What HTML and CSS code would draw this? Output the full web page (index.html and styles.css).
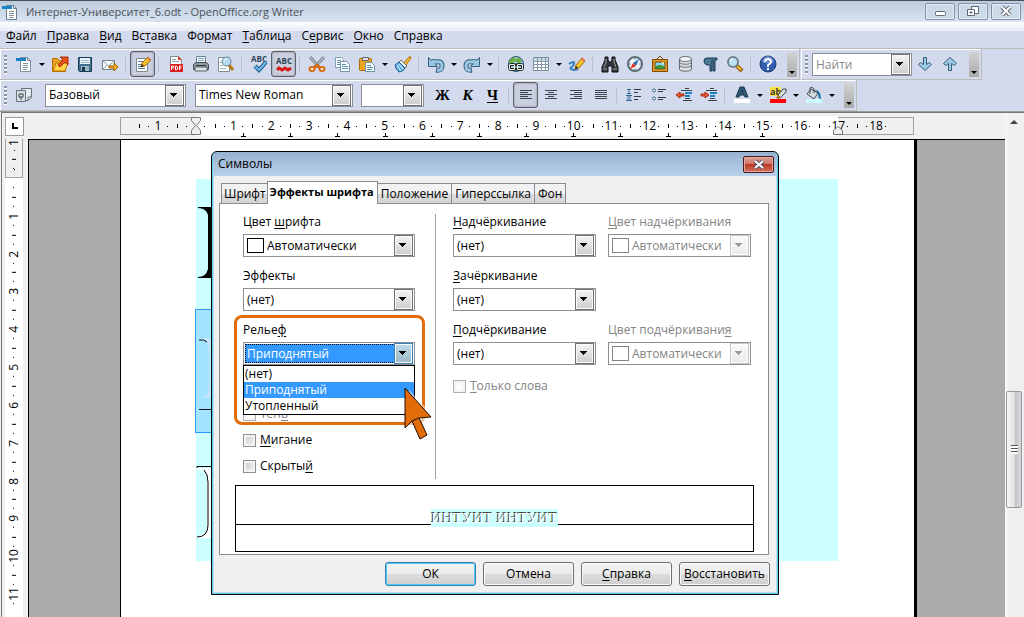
FILE: index.html
```html
<!DOCTYPE html>
<html lang="ru">
<head>
  <meta charset="UTF-8">
  <meta name="viewport" content="width=device-width, initial-scale=1.0">
  <title>Интернет-Университет_6.odt - OpenOffice.org Writer</title>
  <link rel="stylesheet" href="styles.css">
</head>
<body>
  <header class="titlebar">
    <svg class="icon" viewBox="0 0 18 18"><path d="M5.500 2.500h7l3 3v11h-10z" fill="#fff" stroke="#6d7f8c"/><path d="M12.500 2.500v3h3" fill="none" stroke="#6d7f8c"/><path d="M1 3h10v3H1z" fill="#1583c5"/><path d="M8 8.500h5M8 10.500h5M8 12.500h5M8 14.500h4" stroke="#7d929f"/></svg>
    <h1>Интернет-Университет_6.odt - OpenOffice.org Writer</h1>
    <div class="window-buttons">
      <button aria-label="Свернуть"><svg viewBox="0 0 18 14"><rect x="4.500" y="7.500" width="10" height="4" rx="1" fill="#fff" stroke="#626878"/></svg></button>
      <button aria-label="Восстановить окно"><svg viewBox="0 0 18 14"><path d="M7.500 2.500h7v7h-7z" fill="#fff" stroke="#626878"/><path d="M3.500 5.500h7v6h-7z" fill="#fff" stroke="#626878"/><path d="M6 8h2v1H6z" stroke="#626878"/></svg></button>
      <button aria-label="Закрыть"><svg viewBox="0 0 18 14"><path d="m5 3 8 8m0-8-8 8" stroke="#626878" stroke-width="4"/><path d="m5 3 8 8m0-8-8 8" stroke="#fff" stroke-width="2"/></svg></button>
    </div>
  </header>

  <nav class="menubar">
    <a href="#"><u>Ф</u>айл</a>
    <a href="#"><u>П</u>равка</a>
    <a href="#"><u>В</u>ид</a>
    <a href="#">Вс<u>т</u>авка</a>
    <a href="#">Фо<u>р</u>мат</a>
    <a href="#"><u>Т</u>аблица</a>
    <a href="#">С<u>е</u>рвис</a>
    <a href="#"><u>О</u>кно</a>
    <a href="#">Спр<u>а</u>вка</a>
  </nav>

  <div class="toolbars">
    <div class="toolbar">
      <span class="grip"></span>
      <button class="tool" aria-label="Создать"><svg class="icon" viewBox="0 0 18 18"><path d="M5.500 2.500h7l3 3v11h-10z" fill="#fff" stroke="#7d8f9c"/><path d="M12.500 2.500v3h3" fill="none" stroke="#7d8f9c"/><path d="M1 3h10v3H1z" fill="#1583c5"/><path d="M8 8.500h5M8 10.500h5M8 12.500h5M8 14.500h4" stroke="#7d929f"/></svg></button>
      <button class="drop" aria-label="Создать, список"></button>
      <button class="tool" aria-label="Открыть"><svg class="icon" viewBox="0 0 18 18"><path d="M1.500 16.500v-13h5l2 2h6v11z" fill="#e9a31c" stroke="#b76b00"/><path d="m2 16 3-8h12l-3 8z" fill="#ffd548" stroke="#bd7300"/><path d="m7 10 5-5-3-3h8v8l-3-3-5 5z" fill="#e9541b" stroke="#a92d05"/></svg></button>
      <button class="tool" aria-label="Сохранить"><svg class="icon" viewBox="0 0 18 18"><path d="M2.500 2.500h13v14h-12l-1-1z" fill="#426e8e" stroke="#173a55"/><path d="M4 3h10v6H4z" fill="#e5f2f8"/><path d="M5 11h8v5H5z" fill="#9cb7c6"/><path d="M6 12h3v4H6z" fill="#17374e"/><path d="M5 5.500h8M5 7.500h8" stroke="#a4bccb"/></svg></button>
      <button class="tool" aria-label="Отправить"><svg class="icon" viewBox="0 0 18 18"><path d="M1.500 5.500h12v9h-12z" fill="#f6f8f9" stroke="#76848e"/><path d="m2 6 5.500 5L13 6M2 14l4-4m7 4-4-4" fill="none" stroke="#91a0a9"/><path d="M8 11h5V8l4 4-4 4v-3H8z" fill="#f7af24" stroke="#a76800"/></svg></button>
      <span class="sep"></span>
      <button class="tool pressed" aria-label="Редактировать"><svg class="icon" viewBox="0 0 18 18"><path d="M2.500 3.500h11v13h-11z" fill="#fff" stroke="#7e8992"/><path d="M4 6.500h6M4 9.500h4M4 11.500h3M4 13.500h7" stroke="#547d99"/><path d="m7 12 1-4 6-6 3 3-6 6z" fill="#f4c329" stroke="#a36809"/><path d="m13 3 1-1 3 3-1 1z" fill="#ed7360"/><path d="m7 12 1-3 2 2z" fill="#222"/></svg></button>
      <span class="sep"></span>
      <button class="tool" aria-label="Экспорт в PDF"><svg class="icon" viewBox="0 0 18 18"><path d="M3.500 1.500h8l3 3v12h-11z" fill="#fff" stroke="#7d8991"/><path d="M11 1v4h4z" fill="#d7442b"/><path d="M5 4.500h4M5 6.500h7" stroke="#8ba0ae"/><path d="M3 9h13v8H3z" fill="#db1e1e"/><path d="M4.500 15v-4h2v2h-2m4-2v4h1l1-1v-2l-1-1h-1m6 0h-2v4m0-2h2" fill="none" stroke="#fff"/></svg></button>
      <button class="tool" aria-label="Печать"><svg class="icon" viewBox="0 0 18 18"><path d="M4.500 8.500v-7h9v7" fill="#f2f9ff" stroke="#688090"/><path d="M6 3.500h6M6 5.500h6" stroke="#81a7bd"/><path d="M1.500 9.500 4 7.500h10l2.500 2v5h-15z" fill="#919ba2" stroke="#424b51"/><path d="M3 12h12v4H3z" fill="#dce2e5" stroke="#556068"/><path d="M4 10.500h10" stroke="#30383d"/></svg></button>
      <button class="tool" aria-label="Предварительный просмотр"><svg class="icon" viewBox="0 0 18 18"><path d="M1.500 2.500h11v14h-11z" fill="#fff" stroke="#838e96"/><path d="M3 7.500h3M3 10.500h3M3 13.500h6" stroke="#9bafbb"/><path d="m12 10 4 5" stroke="#b77919" stroke-width="3"/><circle cx="9.500" cy="6.500" r="4.500" fill="#b3dbf1" stroke="#6c8493"/><path d="M7 6a3 3 0 0 1 3-2" fill="none" stroke="#fff"/></svg></button>
      <span class="sep"></span>
      <button class="tool" aria-label="Орфография"><svg class="icon" viewBox="0 0 18 18"><text class="abc" x="9" y="7">ABC</text><path d="m5 11 4 4 7-8" fill="none" stroke="#155386" stroke-width="4"/><path d="m5 11 4 4 7-8" fill="none" stroke="#70b9e8" stroke-width="2"/></svg></button>
      <button class="tool pressed" aria-label="Автопроверка"><svg class="icon" viewBox="0 0 18 18"><text class="abc" x="9" y="9">ABC</text><path d="m2 15 2-2 3 2 3-2 3 2 3-2" fill="none" stroke="#d91818" stroke-width="3"/></svg></button>
      <span class="sep"></span>
      <button class="tool" aria-label="Вырезать"><svg class="icon" viewBox="0 0 18 18"><path d="m2 2 9 10M16 2 7 12" stroke="#738089" stroke-width="3"/><path d="m2 2 9 10M16 2 7 12" stroke="#dfe7ec"/><ellipse cx="4" cy="14" rx="2.500" ry="2" fill="#fff" stroke="#d66a10" stroke-width="2"/><ellipse cx="14" cy="14" rx="2.500" ry="2" fill="#fff" stroke="#d66a10" stroke-width="2"/><path d="m6 13 3-3 3 3" fill="none" stroke="#d66a10" stroke-width="3"/></svg></button>
      <button class="tool" aria-label="Копировать"><svg class="icon" viewBox="0 0 18 18"><path d="M2.500 2.500h6l2 2v8h-8z" fill="#fff" stroke="#7fa1b5"/><path d="M4 5.500h4M4 7.500h4M4 9.500h4" stroke="#5c91b0"/><path d="M7.500 6.500h6l3 3v7h-9z" fill="#f6fcff" stroke="#7298ae"/><path d="M9 9.500h4M9 11.500h6M9 13.500h6" stroke="#5c91b0"/></svg></button>
      <button class="tool" aria-label="Вставить"><svg class="icon" viewBox="0 0 18 18"><rect x="1.500" y="3.500" width="12" height="12" rx="1" fill="#eaa51d" stroke="#a96b00"/><path d="M4.500 2.500h6v3h-6z" fill="#e4e7e9" stroke="#5d666b"/><path d="M7.500 7.500h6l3 3v6h-9z" fill="#f7fcff" stroke="#6f91a6"/><path d="M9 10.500h4M9 12.500h6M9 14.500h5" stroke="#5c91b0"/></svg></button>
      <button class="drop" aria-label="Вставить, список"></button>
      <button class="tool" aria-label="Копировать форматирование"><svg class="icon" viewBox="0 0 18 18"><path d="m10 8 5-6q2-1 2 1l-5 7z" fill="#f5b932" stroke="#ad7104"/><path d="m7 5 6 6-2 2-6-6z" fill="#e8edf0" stroke="#68737b"/><path d="m5 7 6 6q-2 4-6 4-3-2-4-7z" fill="#64afe3" stroke="#246294"/><path d="m3 10 4 6m-2-7 4 5" stroke="#d4efff"/></svg></button>
      <span class="sep"></span>
      <button class="tool" aria-label="Отменить"><svg class="icon" viewBox="0 0 18 18"><path d="M4 7h6q5-1 5 4t-6 4" fill="none" stroke="#345e79" stroke-width="5"/><path d="M1.500 2.500v9h9l-3-3 3-3-4-1-2 1z" fill="#99c8e2" stroke="#345e79"/><path d="M5 7h5q5-1 5 4t-5 4" fill="none" stroke="#99c8e2" stroke-width="3"/></svg></button>
      <button class="drop" aria-label="Отменить, список"></button>
      <button class="tool" aria-label="Вернуть"><svg class="icon" viewBox="0 0 18 18"><path d="M14 7H8q-5-1-5 4t6 4" fill="none" stroke="#345e79" stroke-width="5"/><path d="M16.500 2.500v9h-9l3-3-3-3 4-1 2 1z" fill="#99c8e2" stroke="#345e79"/><path d="M13 7H8q-5-1-5 4t5 4" fill="none" stroke="#99c8e2" stroke-width="3"/></svg></button>
      <button class="drop" aria-label="Вернуть, список"></button>
      <span class="sep"></span>
      <button class="tool" aria-label="Гиперссылка"><svg class="icon" viewBox="0 0 18 18"><circle cx="9" cy="9" r="7.500" fill="#a5d0ea" stroke="#26536e"/><path d="m3 5 4-3 2 3-3 3-4 1m9-7 4 4-3 3-4-3z" fill="#6bae38"/><rect x="2.500" y="9.500" width="6" height="5" rx="2" fill="none" stroke="#1e2a30" stroke-width="3"/><rect x="9.500" y="9.500" width="6" height="5" rx="2" fill="none" stroke="#1e2a30" stroke-width="3"/><path d="M2.500 9.500h5v5h-5zm8 0h5v5h-5zM6 12h6" fill="none" stroke="#f0f2df"/></svg></button>
      <button class="tool" aria-label="Таблица"><svg class="icon" viewBox="0 0 18 18"><path d="M1.500 2.500h15v13h-15z" fill="#fff" stroke="#768b98"/><path d="M2 3h14v3H2z" fill="#c7dce7"/><path d="M1 6.500h16M1 9.500h16M1 12.500h16M5.500 3v13M9.500 3v13M13.500 3v13" stroke="#8498a5"/></svg></button>
      <button class="drop" aria-label="Таблица, список"></button>
      <button class="tool" aria-label="Рисование"><svg class="icon" viewBox="0 0 18 18"><path d="M1 9q6-4 5 0c-1 4-5 3-3 5q3 2 7 0" fill="none" stroke="#347ec0" stroke-width="2"/><path d="m7 14 1-4 6-7 3 3-6 7z" fill="#f4c329" stroke="#a36809"/><path d="m13 4 1-2 3 3-1 2z" fill="#e36d56"/><path d="m7 14 1-3 2 2z" fill="#222"/></svg></button>
      <span class="sep"></span>
      <button class="tool" aria-label="Найти и заменить"><svg class="icon" viewBox="0 0 18 18"><path d="M4 2h3v3l1 2h2l1-2V2h3v3l3 7v5h-6v-6H7v6H1v-5l3-7z" fill="#34383b" stroke="#111"/><path d="M5 4v3l-2 5m10-8v3l2 5M2 14h4m6 0h4" fill="none" stroke="#9ba3a7"/></svg></button>
      <button class="tool" aria-label="Навигатор"><svg class="icon" viewBox="0 0 18 18"><circle cx="9" cy="9" r="7" fill="#edf5fa" stroke="#5c6d78" stroke-width="2"/><path d="m13 4-6 4 3 3z" fill="#246fb3"/><path d="m4 14 3-6 3 3z" fill="#e92e22"/><path d="M9 3v2M9 13v2M3 9h2m8 0h2" stroke="#778995"/></svg></button>
      <button class="tool" aria-label="Галерея"><svg class="icon" viewBox="0 0 18 18"><path d="m6 4 3-3 3 3" fill="none" stroke="#754706"/><path d="M1.500 4.500h15v12h-15z" fill="#e99d24" stroke="#824904"/><path d="M4 7h10v7H4z" fill="#8ed1ed" stroke="#704308"/><path d="M4 12q4-4 10 0v2H4z" fill="#3c9032"/><circle cx="12" cy="8" r="1" fill="#fffb9d"/></svg></button>
      <button class="tool" aria-label="Источники данных"><svg class="icon" viewBox="0 0 18 18"><path d="M3.500 4v10c0 3 12 3 12 0V4" fill="#dce0e2" stroke="#626a70"/><ellipse cx="9.500" cy="4" rx="6" ry="2.500" fill="#f5f7f8" stroke="#626a70"/><path d="M3.500 7c0 3 12 3 12 0m-12 3c0 3 12 3 12 0" fill="none" stroke="#697177"/></svg></button>
      <button class="tool" aria-label="Непечатаемые символы"><svg class="icon" viewBox="0 0 18 18"><path d="M6 3h10v2h-2v11h-2V5h-1v11H9v-6H6q-3-1-3-4t3-3z" fill="#4d7896" stroke="#183a51"/></svg></button>
      <button class="tool" aria-label="Масштаб"><svg class="icon" viewBox="0 0 18 18"><path d="m10 10 6 6" stroke="#8d6012" stroke-width="4"/><path d="m11 11 4 4" stroke="#f0b73c" stroke-width="2"/><circle cx="7" cy="7" r="5" fill="#bce1f4" stroke="#71828d" stroke-width="2"/><path d="M4 6a3 3 0 0 1 3-2" fill="none" stroke="#fff"/></svg></button>
      <span class="sep"></span>
      <button class="tool" aria-label="Справка"><svg class="icon" viewBox="0 0 18 18"><circle cx="9" cy="9" r="8" fill="#315eaf" stroke="#183674"/><path d="M3 7a6 6 0 0 1 12 0q-6 3-12 0" fill="#638bcc"/><path d="M6 7q0-3 3-3t3 3q0 1-3 3v2m0 1v2" fill="none" stroke="#fff" stroke-width="2"/></svg></button>
      <button class="more" aria-label="Параметры панели"></button>
    </div>

    <div class="toolbar search">
      <span class="grip"></span>
      <form class="find combo">
        <input type="text" placeholder="Найти" aria-label="Найти">
      </form>
      <button class="tool" aria-label="Найти далее"><svg class="icon" viewBox="0 0 18 18"><path d="M7.500 2.500h3v7l3-2 2 2-6.500 6-6.500-6 2-2 3 2z" fill="#9dc9e2" stroke="#345e79"/></svg></button>
      <button class="tool" aria-label="Найти ранее"><svg class="icon" viewBox="0 0 18 18"><path d="M7.500 15.500h3v-7l3 2 2-2L9 2.500l-6.500 6 2 2 3-2z" fill="#9dc9e2" stroke="#345e79"/></svg></button>
      <button class="more" aria-label="Параметры поиска"></button>
    </div>
  </div>

  <div class="toolbars formatting">
    <div class="toolbar">
      <span class="grip"></span>
      <button class="tool" aria-label="Стили"><svg class="icon" viewBox="0 0 18 18"><path d="M6.500 2.500h10v9l-3 3h-7z" fill="#e7ebef" stroke="#65717a"/><path d="M16 11h-3v3" fill="none" stroke="#65717a"/><path d="M1.500 4.500h9v11h-9z" fill="#d9dee2" stroke="#65717a"/><path d="M4 11V8h4v3H4m2 0v3" fill="none" stroke="#34434e"/></svg></button>
      <span class="combo style-name"><select aria-label="Стиль"><option>Базовый</option></select></span>
      <span class="combo font-name"><select aria-label="Шрифт"><option>Times New Roman</option></select></span>
      <span class="combo font-size"><select aria-label="Кегль"><option></option></select></span>
      <button class="tool letter">Ж</button>
      <button class="tool letter italic">К</button>
      <button class="tool letter underline">Ч</button>
      <span class="sep"></span>
      <button class="tool pressed" aria-label="По левому краю"><svg class="icon" viewBox="0 0 18 18"><path d="M3 4.500h12M3 6.500h8M3 8.500h12M3 10.500h8M3 12.500h12" stroke="#3b454c"/></svg></button>
      <button class="tool" aria-label="По центру"><svg class="icon" viewBox="0 0 18 18"><path d="M3 4.500h12M6 6.500h6M3 8.500h12M6 10.500h6M3 12.500h12" stroke="#3b454c"/></svg></button>
      <button class="tool" aria-label="По правому краю"><svg class="icon" viewBox="0 0 18 18"><path d="M3 4.500h12M7 6.500h8M3 8.500h12M7 10.500h8M3 12.500h12" stroke="#3b454c"/></svg></button>
      <button class="tool" aria-label="По ширине"><svg class="icon" viewBox="0 0 18 18"><path d="M3 4.500h12M3 6.500h12M3 8.500h12M3 10.500h12M3 12.500h12" stroke="#3b454c"/></svg></button>
      <span class="sep"></span>
      <button class="tool" aria-label="Нумерованный список"><svg class="icon" viewBox="0 0 18 18"><path d="M2 3.500h4M2 7.500h4M4 3v5m-3 1.500h6M1 14.500h6M3 9v6m2-6v6" stroke="#356d91"/><path d="M9 3.500h7M9 6.500h4M9 10.500h7M9 13.500h4" stroke="#343c42"/></svg></button>
      <button class="tool" aria-label="Маркированный список"><svg class="icon" viewBox="0 0 18 18"><circle cx="4" cy="4.500" r="1.500" fill="#fff" stroke="#305d7b"/><circle cx="4" cy="12.500" r="1.500" fill="#fff" stroke="#305d7b"/><path d="M8 3.500h8M8 5.500h5M8 11.500h8M8 13.500h5" stroke="#343c42"/></svg></button>
      <button class="tool" aria-label="Уменьшить отступ"><svg class="icon" viewBox="0 0 18 18"><path d="M6 4.500h11M8 14.500h9M10 2.500h4M10 12.500h5" stroke="#394248"/><path d="M10 7h7M10 10h5" stroke="#1b82c3" stroke-width="2"/><path d="M1 9 5 6v2h4v2H5v2z" fill="#e85934" stroke="#a62a10"/></svg></button>
      <button class="tool" aria-label="Увеличить отступ"><svg class="icon" viewBox="0 0 18 18"><path d="M6 4.500h11M8 14.500h9M10 2.500h4M10 12.500h5" stroke="#394248"/><path d="M10 7h7M10 10h5" stroke="#1b82c3" stroke-width="2"/><path d="M9 9 5 6v2H1v2h4v2z" fill="#e85934" stroke="#a62a10"/></svg></button>
      <span class="sep"></span>
      <button class="tool" aria-label="Цвет шрифта"><svg class="icon" viewBox="0 0 18 18"><path d="M3 11h3l1-2h4l1 2h3L11 1H7zm5-5 1-2 1 3H8z" fill="#315775" stroke="#173850"/><path d="M1 13h16v4H1z" fill="#fff"/></svg></button>
      <button class="drop" aria-label="Цвет шрифта, список"></button>
      <button class="tool" aria-label="Выделение цветом"><svg class="icon" viewBox="0 0 18 18"><path d="M1 1h11v9H1z" fill="#ffe13b"/><text class="ab" x="1" y="9">ab</text><path d="m9 9 5-6h3v3l-6 6z" fill="#d8dddf" stroke="#3d4950"/><path d="m7 12 2-3 3 3-3 1z" fill="#b0711d"/><path d="M1 13h16v4H1z" fill="#f00"/></svg></button>
      <button class="drop" aria-label="Выделение, список"></button>
      <button class="tool" aria-label="Фон абзаца"><svg class="icon" viewBox="0 0 18 18"><path d="M10 4q6 0 6 9-3 0-3-5z" fill="#2379ac"/><path d="m6 3 7 4-4 6-7-5z" fill="#d4dade" stroke="#3f4d57"/><path d="M5 8V2q3-2 4 1v4" fill="none" stroke="#3c4953"/><path d="M1 13h16v4H1z" fill="#cff"/></svg></button>
      <button class="drop" aria-label="Фон, список"></button>
      <button class="more" aria-label="Параметры форматирования"></button>
    </div>
  </div>

  <main class="editor">
    <div class="ruler-row">
      <button class="tab-type" aria-label="Тип табуляции"><svg viewBox="0 0 10 10"><path d="M3 2v5h5" fill="none" stroke="#000" stroke-width="2"/></svg></button>
      <div class="ruler">
        <div class="ruler-text"></div>
        <ol class="scale">
          <li>1</li><li></li><li>1</li><li>2</li><li>3</li><li>4</li><li>5</li><li>6</li><li>7</li><li>8</li>
          <li>9</li><li>10</li><li>11</li><li>12</li><li>13</li><li>14</li><li>15</li><li>16</li><li>17</li><li>18</li>
        </ol>
        <svg class="tab-stops" viewBox="0 0 642 4" preserveAspectRatio="none"><path d="M45 3.500h5M92 3.500h5M139 3.500h5M187 3.500h5M234 3.500h5M281 3.500h5M328 3.500h5M375 3.500h5M422 3.500h5M470 3.500h5M517 3.500h5M564 3.500h5M47.500 0v3M94.500 0v3M141.500 0v3M189.500 0v3M236.500 0v3M283.500 0v3M330.500 0v3M377.500 0v3M424.500 0v3M472.500 0v3M519.500 0v3M566.500 0v3" stroke="#000"/></svg>
        <svg class="indent indent-left" viewBox="0 0 12 20"><path d="M1.500 1.500h9v3l-4 5 4 5v4h-9v-4l4-5-4-5z" fill="#f0f0f0" stroke="#777"/></svg>
        <svg class="indent indent-right" viewBox="0 0 12 20"><path d="M1.500 18.500v-4l4.500-4 4.500 4v4z" fill="#f0f0f0" stroke="#777"/></svg>
      </div>
    </div>

    <div class="workspace">
      <div class="ruler-side">
        <div class="side-margin"><span>1</span></div>
        <ol class="scale scale-side">
          <li></li><li>1</li><li>2</li><li>3</li><li>4</li><li>5</li><li>6</li><li>7</li><li>8</li><li>9</li><li>10</li><li>11</li>
        </ol>
      </div>
      <div class="canvas">
        <article class="page">
          <div class="paragraph">
            <svg class="glyph" viewBox="0 0 20 130"><path d="M2 28h20v71H2v-1q8 0 10-8V36q-2-7-10-7z"/></svg>
            <div class="selected">
              <svg class="glyph" viewBox="0 0 20 122"><path d="M2 28q10 0 11 11v38q0 10-9 11h16V28z" fill="#c5e3ff"/><path d="M3 30q5-1 8 2M3 99.500h17" fill="none" stroke="#111"/></svg>
            </div>
            <svg class="glyph" viewBox="0 0 20 128"><path d="M1 35h19v70H1z" fill="#fff"/><path d="M1 37h4q6 1 6 9v47q0 9-10 10z" fill="#cff"/><path d="M1 35v-1.500h20M8 37q4 4 4 12v43q0 12-11 12" fill="none" stroke="#000"/></svg>
          </div>
        </article>
      </div>
    </div>

    <div class="scrollbar">
      <button class="scroll-up" aria-label="Вверх"></button>
      <div class="thumb"></div>
    </div>
  </main>

  <section class="dialog" role="dialog" aria-labelledby="dialog-title">
    <header class="dialog-title">
      <h2 id="dialog-title">Символы</h2>
      <button class="close" aria-label="Закрыть окно"><svg viewBox="0 0 18 14"><path d="m5 4 8 7m0-7-8 7" stroke="#50566a" stroke-width="4"/><path d="m5 4 8 7m0-7-8 7" stroke="#fff" stroke-width="2"/></svg></button>
    </header>

    <div class="dialog-body">
      <div class="tabs" role="tablist">
        <button role="tab">Шрифт</button>
        <button role="tab" class="active" aria-selected="true">Эффекты шрифта</button>
        <button role="tab">Положение</button>
        <button role="tab">Гиперссылка</button>
        <button role="tab">Фон</button>
      </div>

      <div class="panel">
        <div class="columns">
          <div class="column effects">
            <div class="field">
              <label for="font-color">Цвет <u>ш</u>рифта</label>
              <span class="combo swatch"><select id="font-color"><option>Автоматически</option></select></span>
            </div>
            <div class="field">
              <label for="effects">Эффекты</label>
              <span class="combo"><select id="effects"><option>(нет)</option></select></span>
            </div>
            <div class="field relief">
              <label for="relief">Релье<u>ф</u></label>
              <span class="combo open"><select id="relief"><option>Приподнятый</option></select></span>
              <ul class="options" role="listbox" aria-label="Рельеф">
                <li role="option">(нет)</li>
                <li role="option" class="current" aria-selected="true">Приподнятый</li>
                <li role="option">Утопленный</li>
              </ul>
              <div class="callout"></div>
              <svg class="pointer" viewBox="0 0 32 54"><path d="m6 3 26 28-9 1 6 19-9 4-7-20-7 7z" fill="#fff" opacity=".6"/><path d="M2 1v40l7-7 8 18 7-4-8-17 12-1z" fill="#e36c0a" stroke="#1c0d00"/><path d="m9 34 7-3" stroke="#1c0d00"/></svg>
            </div>
            <div class="checks">
              <label class="disabled"><input type="checkbox" disabled> <span>Тен<u>ь</u></span></label>
              <label><input type="checkbox"> <span><u>М</u>игание</span></label>
              <label><input type="checkbox"> <span>Скрыты<u>й</u></span></label>
            </div>
          </div>

          <div class="column lines">
            <div class="field">
              <label for="overline"><u>Н</u>адчёркивание</label>
              <span class="combo"><select id="overline"><option>(нет)</option></select></span>
            </div>
            <div class="field">
              <label for="strike"><u>З</u>ачёркивание</label>
              <span class="combo"><select id="strike"><option>(нет)</option></select></span>
            </div>
            <div class="field">
              <label for="underline"><u>П</u>одчёркивание</label>
              <span class="combo"><select id="underline"><option>(нет)</option></select></span>
            </div>
            <label class="check-row disabled"><input type="checkbox" disabled> <span><u>Т</u>олько слова</span></label>
          </div>

          <div class="column colors">
            <div class="field disabled">
              <label for="overline-color"><u>Ц</u>вет надчёркивания</label>
              <span class="combo swatch"><select id="overline-color" disabled><option>Автоматически</option></select></span>
            </div>
            <div class="field disabled">
              <label for="underline-color">Цвет подчёркивани<u>я</u></label>
              <span class="combo swatch"><select id="underline-color" disabled><option>Автоматически</option></select></span>
            </div>
          </div>
        </div>

        <div class="preview"><span>ИНТУИТ ИНТУИТ</span></div>
      </div>

      <div class="actions">
        <button class="default">ОК</button>
        <button>Отмена</button>
        <button><u>С</u>правка</button>
        <button><u>В</u>осстановить</button>
      </div>
    </div>
  </section>
</body>
</html>
```
FILE: styles.css
```css
* { box-sizing: border-box; }

body {
  margin: 0;
  height: 100vh;
  display: flex;
  flex-direction: column;
  overflow: hidden;
  background: #f0f0f0;
  color: #000;
  font: 12px/16px "Open Sans", "Noto Sans", sans-serif;
}

button, input, select { font: inherit; color: inherit; margin: 0; padding: 0; }
button { border: 0; background: none; }
h1, h2 { margin: 0; font: inherit; }
ul, ol { margin: 0; padding: 0; list-style: none; }
u { text-underline-offset: 2px; }
svg { display: block; flex: none; }
.icon { width: 18px; height: 18px; overflow: visible; }

/* window title */
.titlebar {
  display: flex;
  align-items: center;
  height: 22px;
  padding: 0 3px 0 1px;
  border-top: 1px solid #4a4f55;
  background: linear-gradient(#bccbdc, #d8e4f0);
}
.titlebar h1 { flex: 1; margin-left: 7px; color: #4b5259; font-size: 11px; }
.window-buttons { display: flex; gap: 3px; }
.window-buttons button {
  display: flex;
  justify-content: center;
  width: 30px;
  height: 17px;
  border: 1px solid #8391ab;
  border-radius: 2px;
  background: #ccd9e7;
  box-shadow: inset 0 0 0 1px #e3ecf5;
}
.window-buttons svg, .close svg { width: 18px; height: 14px; }

.menubar {
  display: flex;
  gap: 10px;
  align-items: center;
  height: 27px;
  padding: 2px 6px 0;
  border-bottom: 1px solid #bbb;
  background: linear-gradient(#fff, #e6ebf5 9px, #d3daed 9px);
}
.menubar a { color: #000; text-decoration: none; }

/* toolbars */
.toolbars { display: flex; height: 31px; background: #d3daed; }
.toolbar {
  display: flex;
  align-items: center;
  height: 31px;
  padding-left: 4px;
  border: solid #bbb;
  border-width: 0 1px 1px 0;
  box-shadow: inset 1px 1px #fff;
}
.search { margin-left: 1px; }
.formatting { height: 32px; border-bottom: 1px solid #999; }
.grip {
  width: 3px;
  height: 19px;
  margin-right: 4px;
  background: repeating-linear-gradient(#8c93a4 0 2px, #fff 2px 3px, transparent 3px 4px);
}
.tool { display: flex; align-items: center; justify-content: center; width: 25px; height: 26px; }
.pressed {
  border: 1px solid #5b606b;
  border-radius: 3px;
  background: #c9cfdf;
  box-shadow: inset 0 0 2px #777;
}
.drop { display: flex; justify-content: center; width: 11px; }
.drop::before, .more::after {
  content: "";
  border: solid transparent;
  border-width: 3px 3px 0;
  border-top-color: #000;
}
.sep { width: 8px; height: 15px; background: linear-gradient(#bbbfca, #bbbfca) 3px 0 / 1px 100% no-repeat; }
.more {
  display: flex;
  align-items: flex-end;
  justify-content: center;
  width: 10px;
  height: 25px;
  margin: 0 2px 0 7px;
  padding-bottom: 3px;
  background: linear-gradient(#d2d2d2, #aaa);
}
.abc { font: bold 8px "Open Sans", sans-serif; text-anchor: middle; fill: #2e4658; }
.ab { font: bold 9px "Open Sans", sans-serif; fill: #333; }
.letter { font: bold 15px "Liberation Serif", serif; }
.italic { font-style: italic; }
.underline { text-decoration: underline; text-underline-offset: 2px; }

/* drop-down boxes: the arrow button shares the grid cell with the field */
.combo { display: grid; height: 23px; border: 1px solid #8e8f94; background: #fff; }
.combo > select, .combo > input, .combo::before, .combo::after { grid-area: 1 / 1; }
.combo select, .combo input {
  appearance: none;
  width: 100%;
  height: 21px;
  padding: 0 20px 0 3px;
  border: 0;
  border-radius: 0;
  outline: 0;
  background: none;
}
.combo::after {
  content: "";
  place-self: center end;
  width: 17px;
  height: 19px;
  margin-right: 1px;
  border: 1px solid #707070;
  background:
    linear-gradient(#000, #000) 4px 7px / 7px 1px no-repeat,
    linear-gradient(#000, #000) 5px 8px / 5px 1px no-repeat,
    linear-gradient(#000, #000) 6px 9px / 3px 1px no-repeat,
    linear-gradient(#000, #000) 7px 10px / 1px 1px no-repeat,
    linear-gradient(#f4f4f4, #cdcdcd);
  box-shadow: inset 0 0 0 1px #fafafa;
  pointer-events: none;
}
.swatch::before {
  content: "";
  place-self: center start;
  width: 15px;
  height: 13px;
  margin-left: 3px;
  border: 1px solid #000;
}
.swatch select { padding-left: 23px; }
.find { width: 100px; margin: 0; }
.find input::placeholder { color: #8a8a8a; opacity: 1; }
.style-name { width: 141px; margin: 0 9px; }
.font-name { width: 158px; margin-right: 8px; }
.font-size { width: 63px; margin-right: 6px; }

/* document area */
.editor {
  flex: 1;
  display: grid;
  grid-template: 26px 1fr / 1fr 19px;
  min-height: 0;
  margin-left: 1px;
  border: solid #777;
  border-width: 1px 0 0 1px;
}
.ruler-row { display: flex; align-items: center; padding: 0 91px 0 3px; }
.tab-type {
  display: flex;
  align-items: center;
  justify-content: center;
  width: 19px;
  height: 19px;
  margin-right: 96px;
  border: 1px solid #999;
  background: #fff;
}
.tab-type svg { width: 10px; height: 10px; }
.ruler {
  flex: 1;
  display: grid;
  position: relative;
  height: 18px;
  border: 1px solid #a0a0a0;
  background: #f0f0f0;
}
.ruler > div, .ruler > ol { grid-area: 1 / 1; }
.ruler-text { margin: -2px 75px; background: #fff; }
.scale { display: flex; padding: 0 18px; }
.scale li {
  flex: 1;
  min-width: 0;
  text-align: center;
  background:
    linear-gradient(#000, #000) 0 50% / 1px 4px no-repeat,
    linear-gradient(#000, #000) 25% 50% / 1px 1px no-repeat,
    linear-gradient(#000, #000) 75% 50% / 1px 1px no-repeat;
}
.tab-stops { position: absolute; left: 75px; bottom: -3px; width: calc(100% - 150px); height: 4px; }
.indent { position: absolute; top: -2px; width: 12px; height: 20px; }
.indent-left { left: 69px; }
.indent-right { right: 69px; }

.workspace { grid-row: 2; display: flex; min-height: 0; }
.ruler-side { display: grid; width: 18px; margin: 0 5px 0 3px; background: #fff; }
.side-margin {
  grid-area: 1 / 1;
  height: 39px;
  border: solid #a0a0a0;
  border-width: 0 1px 1px;
  background:
    linear-gradient(#000, #000) 50% 11px / 1px 1px no-repeat,
    linear-gradient(#000, #000) 50% 30px / 1px 1px no-repeat,
    #f0f0f0;
}
.side-margin span { display: block; width: 16px; height: 7px; line-height: 16px; writing-mode: vertical-rl; transform: rotate(180deg); }
.scale-side { grid-area: 1 / 1; flex-direction: column; padding: 20px 0 4px; }
.scale-side li {
  display: flex;
  align-items: center;
  justify-content: center;
  writing-mode: vertical-rl;
  transform: rotate(180deg);
  background:
    linear-gradient(#000, #000) 50% 100% / 4px 1px no-repeat,
    linear-gradient(#000, #000) 50% 25% / 1px 1px no-repeat,
    linear-gradient(#000, #000) 50% 75% / 1px 1px no-repeat;
}
.canvas {
  flex: 1;
  padding: 0 88px 0 91px;
  border: solid #000;
  border-width: 1px 0 0 1px;
  background: #aaa;
}
.page {
  height: 100%;
  padding: 39px 76px 0 75px;
  border: solid #000;
  border-width: 0 3px 0 1px;
  background: #fff;
}
.paragraph { height: 382px; background: #cff; }
.glyph { width: 20px; }
.selected { width: 80%; height: 124px; margin-left: -1px; border: 1px solid #39f; background: #a2e4ff; }

.scrollbar {
  grid-area: 1 / 2 / 3 / 3;
  padding: 0 2px 0 1px;
  background: linear-gradient(90deg, #f8f8f8, #efefef 4px);
}
.scroll-up { display: flex; align-items: center; justify-content: center; width: 100%; height: 18px; }
.scroll-up::before { content: ""; border: solid transparent; border-width: 0 4px 4px; border-bottom-color: #444; }
.thumb {
  height: 117px;
  margin-top: 260px;
  border: 1px solid #979797;
  border-radius: 2px;
  background:
    repeating-linear-gradient(#555 0 1px, #fff 1px 3px) center / 7px 9px no-repeat,
    linear-gradient(90deg, #f5f5f5, #e4e4e6 50%, #c4c4ca 60%, #d8d8dc);
}

/* character dialog */
.dialog {
  position: absolute;
  left: 211px;
  top: 151px;
  width: 568px;
  border: 1px solid #000;
  border-radius: 6px 6px 0 0;
  background: #f0f0f0;
  box-shadow: inset 0 0 0 1px #5ccfee, inset 0 0 0 2px #c0d4ea;
}
.dialog-title {
  display: flex;
  align-items: center;
  justify-content: space-between;
  height: 24px;
  margin: 0 1px;
  padding: 0 3px 0 5px;
  border-radius: 5px 5px 0 0;
  background: linear-gradient(#97b2d0, #b9d1ea);
}
.close {
  display: flex;
  justify-content: center;
  width: 31px;
  height: 17px;
  border: 1px solid #4b1820;
  border-radius: 2px;
  background: linear-gradient(#e0a196, #cf7466 48%, #b93a26 50%, #d0705c);
  box-shadow: inset 0 0 0 1px #e3aaa1;
}
.dialog-body { padding: 5px 8px 8px 7px; }

.tabs { display: flex; align-items: flex-end; padding-left: 2px; }
.tabs button {
  height: 20px;
  padding: 0 3px;
  border: 1px solid #898c95;
  border-left-width: 0;
  border-bottom: 0;
  background: linear-gradient(#f2f2f2 50%, #dcdcdc 50%, #d4d4d4);
}
.tabs button:first-child { padding: 0 1px 0 2px; border-left-width: 1px; }
.tabs .active {
  z-index: 1;
  height: 23px;
  margin: 0 0 -1px -1px;
  padding: 0 3px 2px 2px;
  border-left-width: 1px;
  background: #fff;
  font-size: 11px;
  font-weight: bold;
}

.panel {
  margin-right: 1px;
  padding: 10px 14px 2px 15px;
  border: 1px solid #898c95;
  background: #fff;
}
.columns { display: flex; }
.column { display: flex; flex-direction: column; gap: 11px; }
.effects { width: 201px; padding: 0 20px 5px 8px; border-right: 1px solid #a0a0a0; margin-bottom: 6px; }
.lines { width: 143px; margin-left: 17px; }
.colors { width: 143px; margin-left: 12px; gap: 65px; }
.field { display: flex; flex-direction: column; gap: 4px; white-space: nowrap; }
.disabled, .disabled select { color: #838383; opacity: 1; }
.disabled .combo::before { border-color: #838383; }
.disabled .combo::after { opacity: .4; }

.relief { position: relative; }
.open select { height: 19px; margin: 1px; width: calc(100% - 2px); padding-left: 1px; border: 1px dotted #000; background: #39f; color: #fff; }
.open::after { border-color: #3c7fb1; background-color: #c4e5f6; background-blend-mode: multiply; }
.options {
  position: absolute;
  top: 43px;
  left: 0;
  right: 0;
  border: 1px solid #000;
  background: #fff;
}
.options li { padding: 0 1px; }
.options .current { background: #39f; color: #fff; }
.callout {
  position: absolute;
  inset: -7px -10px -60px -9px;
  border: 3px solid #e36c0a;
  border-radius: 8px;
}
.pointer { position: absolute; left: 160px; top: 65px; width: 32px; height: 54px; }

.checks { display: flex; flex-direction: column; gap: 10px; margin-top: 30px; }
.checks label, .check-row { display: flex; align-items: center; gap: 4px; }
.check-row { margin-top: 2px; }
input[type="checkbox"] {
  appearance: none;
  width: 13px;
  height: 13px;
  border: 1px solid #8e8f8f;
  background: linear-gradient(135deg, #c6cad0, #f6f6f6);
  box-shadow: inset 0 0 0 2px #f4f4f4;
}
input[type="checkbox"]:disabled { border-color: #b1b1b1; background: #fbfbfb; }

.preview {
  display: flex;
  align-items: flex-end;
  height: 67px;
  padding-bottom: 24px;
  border: 1px solid #000;
}
.preview::before, .preview::after { content: ""; flex: 1; margin-bottom: 2px; border-bottom: 1px solid #000; }
.preview span {
  background: #cff;
  color: #fff;
  font: 15px/18px "Liberation Serif", serif;
  text-shadow: -1px -1px #333;
}

.actions { display: flex; justify-content: flex-end; gap: 7px; margin-top: 7px; }
.actions button {
  width: 91px;
  height: 24px;
  border: 1px solid #707070;
  border-radius: 3px;
  background: linear-gradient(#f3f3f3, #ebebeb 50%, #dcdcdc 50%, #cfcfcf);
  box-shadow: inset 0 0 0 1px #fafafa;
}
.actions .default { border-color: #3c7fb1; box-shadow: inset 0 0 0 1px #48cdf5; }
```
